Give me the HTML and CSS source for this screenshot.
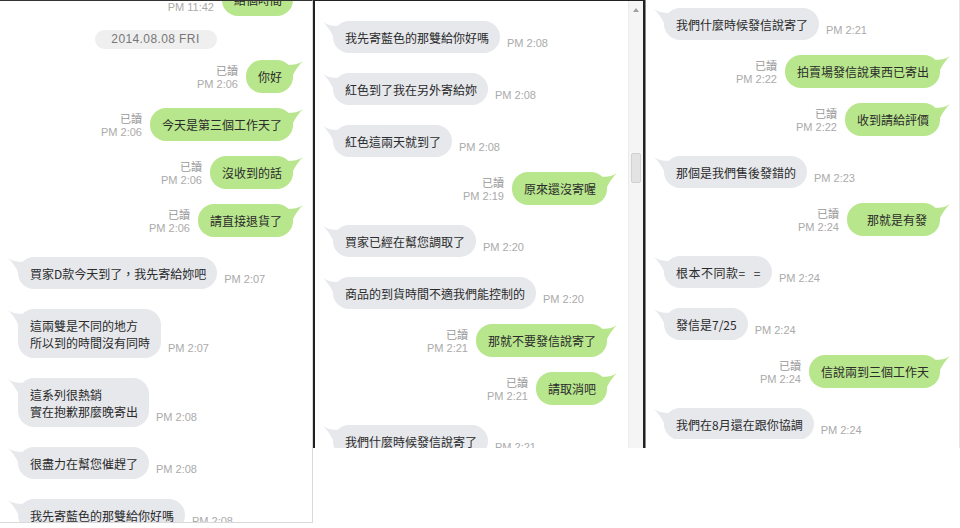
FILE: index.html
```html
<!DOCTYPE html>
<html lang="zh-Hant">
<head>
    <meta charset="UTF-8">
    <meta name="viewport" content="width=device-width, initial-scale=1.0">
    <title>LINE 對話紀錄</title>
    <link rel="stylesheet" href="styles.css">
</head>
<body>
    <div class="screens">
        <section class="pane pane-1">
            <div class="chat chat-1">
                <div class="msg mine">
                    <div class="meta"><span class="read">已讀</span>PM 11:42</div>
                    <div class="bubble">給個時間</div>
                </div>
                <div class="date">2014.08.08 FRI</div>
                <div class="msg mine">
                    <div class="meta"><span class="read">已讀</span>PM 2:06</div>
                    <div class="bubble">你好</div>
                </div>
                <div class="msg mine">
                    <div class="meta"><span class="read">已讀</span>PM 2:06</div>
                    <div class="bubble">今天是第三個工作天了</div>
                </div>
                <div class="msg mine">
                    <div class="meta"><span class="read">已讀</span>PM 2:06</div>
                    <div class="bubble">沒收到的話</div>
                </div>
                <div class="msg mine">
                    <div class="meta"><span class="read">已讀</span>PM 2:06</div>
                    <div class="bubble">請直接退貨了</div>
                </div>
                <div class="msg theirs">
                    <div class="bubble">買家D款今天到了，我先寄給妳吧</div>
                    <div class="meta">PM 2:07</div>
                </div>
                <div class="msg theirs">
                    <div class="bubble">這兩雙是不同的地方<br>所以到的時間沒有同時</div>
                    <div class="meta">PM 2:07</div>
                </div>
                <div class="msg theirs">
                    <div class="bubble">這系列很熱銷<br>實在抱歉那麼晚寄出</div>
                    <div class="meta">PM 2:08</div>
                </div>
                <div class="msg theirs">
                    <div class="bubble">很盡力在幫您催趕了</div>
                    <div class="meta">PM 2:08</div>
                </div>
                <div class="msg theirs">
                    <div class="bubble">我先寄藍色的那雙給你好嗎</div>
                    <div class="meta">PM 2:08</div>
                </div>
            </div>
        </section>

        <section class="pane pane-2">
            <div class="chat chat-2">
                <div class="msg theirs">
                    <div class="bubble">我先寄藍色的那雙給你好嗎</div>
                    <div class="meta">PM 2:08</div>
                </div>
                <div class="msg theirs">
                    <div class="bubble">紅色到了我在另外寄給妳</div>
                    <div class="meta">PM 2:08</div>
                </div>
                <div class="msg theirs">
                    <div class="bubble">紅色這兩天就到了</div>
                    <div class="meta">PM 2:08</div>
                </div>
                <div class="msg mine">
                    <div class="meta"><span class="read">已讀</span>PM 2:19</div>
                    <div class="bubble">原來還沒寄喔</div>
                </div>
                <div class="msg theirs">
                    <div class="bubble">買家已經在幫您調取了</div>
                    <div class="meta">PM 2:20</div>
                </div>
                <div class="msg theirs">
                    <div class="bubble">商品的到貨時間不適我們能控制的</div>
                    <div class="meta">PM 2:20</div>
                </div>
                <div class="msg mine">
                    <div class="meta"><span class="read">已讀</span>PM 2:21</div>
                    <div class="bubble">那就不要發信說寄了</div>
                </div>
                <div class="msg mine">
                    <div class="meta"><span class="read">已讀</span>PM 2:21</div>
                    <div class="bubble">請取消吧</div>
                </div>
                <div class="msg theirs">
                    <div class="bubble">我們什麼時候發信說寄了</div>
                    <div class="meta">PM 2:21</div>
                </div>
            </div>
            <div class="scrollbar">
                <span class="arrow"></span>
                <span class="thumb"></span>
            </div>
        </section>

        <section class="pane pane-3">
            <div class="chat chat-3">
                <div class="msg theirs">
                    <div class="bubble">我們什麼時候發信說寄了</div>
                    <div class="meta">PM 2:21</div>
                </div>
                <div class="msg mine">
                    <div class="meta"><span class="read">已讀</span>PM 2:22</div>
                    <div class="bubble">拍賣場發信說東西已寄出</div>
                </div>
                <div class="msg mine">
                    <div class="meta"><span class="read">已讀</span>PM 2:22</div>
                    <div class="bubble">收到請給評價</div>
                </div>
                <div class="msg theirs">
                    <div class="bubble">那個是我們售後發錯的</div>
                    <div class="meta">PM 2:23</div>
                </div>
                <div class="msg mine">
                    <div class="meta"><span class="read">已讀</span>PM 2:24</div>
                    <div class="bubble wide">那就是有發</div>
                </div>
                <div class="msg theirs">
                    <div class="bubble spaced">根本不同款= =</div>
                    <div class="meta">PM 2:24</div>
                </div>
                <div class="msg theirs">
                    <div class="bubble">發信是7/25</div>
                    <div class="meta">PM 2:24</div>
                </div>
                <div class="msg mine">
                    <div class="meta"><span class="read">已讀</span>PM 2:24</div>
                    <div class="bubble">信說兩到三個工作天</div>
                </div>
                <div class="msg theirs">
                    <div class="bubble">我們在8月還在跟你協調</div>
                    <div class="meta">PM 2:24</div>
                </div>
            </div>
        </section>
    </div>
</body>
</html>
```

FILE: styles.css
```css
* {
    margin: 0;
    padding: 0;
    box-sizing: border-box;
}

body {
    background-color: #fff;
    font-family: "Liberation Sans", "Noto Sans CJK TC", sans-serif;
    color: #2b2b2b;
}

.screens {
    display: flex;
    align-items: flex-start;
}

/* panes */

.pane-1 {
    width: 313px;
    height: 523px;
    border-top: 1px solid #333;
    border-right: 1px solid #d9d9d9;
    border-bottom: 1px solid #d9d9d9;
}

.pane-2 {
    display: flex;
    width: 332px;
    height: 448px;
    border: 2px solid #222;
    border-top-width: 1px;
    border-bottom: none;
}

.pane-3 {
    width: 315px;
    height: 448px;
    border-left: 1px solid #888;
    border-right: 1px solid #e4e4e4;
}

.chat {
    height: 100%;
    overflow: hidden;
    padding: 0 19px 0 18px;
}

.chat-1 .msg:first-child {
    margin-top: -18px;
}

.chat-2 {
    flex: 1;
    padding-right: 21px;
}

.chat-3 {
    height: 439px;
}

.chat-3 .msg:first-child {
    margin-top: 8px;
}

.scrollbar {
    display: flex;
    flex-direction: column;
    align-items: center;
    width: 15px;
    background-color: #f5f5f5;
    border-left: 1px solid #ebebeb;
}

.scrollbar .arrow {
    margin-top: 7px;
    width: 0;
    height: 0;
    border-left: 3px solid transparent;
    border-right: 3px solid transparent;
    border-bottom: 4px solid #a0a0a0;
}

.scrollbar .thumb {
    margin-top: 141px;
    width: 10px;
    height: 30px;
    background-color: #e3e3e3;
    border: 1px solid #d2d2d2;
    border-radius: 2px;
}

/* messages */

.date {
    width: 122px;
    height: 19px;
    margin: 14px auto 0;
    line-height: 19px;
    border-radius: 10px;
    background-color: #efefef;
    color: #777;
    font-size: 12px;
    letter-spacing: 0.4px;
    text-align: center;
}

.date + .msg {
    margin-top: 11px;
}

.msg {
    display: flex;
    align-items: flex-end;
}

.mine {
    justify-content: flex-end;
    gap: 8px;
    margin-top: 15px;
}

.theirs {
    gap: 7px;
    margin-top: 20px;
}

.bubble {
    position: relative;
    padding: 8px 11px 8px 12px;
    border-radius: 16px;
    font-family: "Noto Sans CJK TC", sans-serif;
    font-size: 12px;
    line-height: 17px;
    white-space: nowrap;
}

.bubble::before {
    content: "";
    position: absolute;
    top: 1px;
    width: 16px;
    height: 14px;
    background-color: inherit;
}

.mine .bubble {
    background-color: #b8e68c;
}

.mine .bubble::before {
    right: -10px;
    clip-path: path("M0 4 C6 4 12 3 16 0 C12 4 9 8 6 14 L0 14 Z");
}

.mine .bubble.wide {
    padding-left: 20px;
    padding-right: 13px;
}

.theirs .bubble {
    padding-bottom: 7px;
    background-color: #e6e8eb;
}

.theirs .bubble::before {
    left: -10px;
    clip-path: path("M16 4 C10 4 4 3 0 0 C4 4 7 8 10 14 L16 14 Z");
}

.bubble.spaced {
    word-spacing: 5px;
    letter-spacing: 0.5px;
}

.meta {
    margin-bottom: 2px;
    color: #aaa;
    font-size: 11px;
    line-height: 14px;
    text-align: right;
    white-space: nowrap;
}

.theirs .meta {
    margin-bottom: 3px;
}

.meta .read {
    display: block;
    color: #999;
    font-family: "Noto Sans CJK TC", sans-serif;
}
```
